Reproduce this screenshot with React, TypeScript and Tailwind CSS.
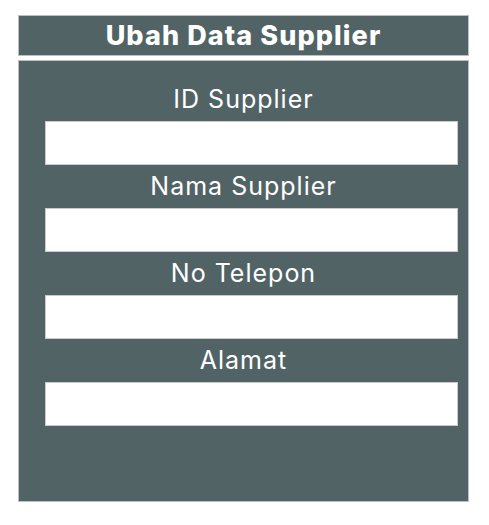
const fields = ["ID Supplier", "Nama Supplier", "No Telepon", "Alamat"];

export default function App() {
  return (
    <div className="min-h-[525px] w-[489px] bg-white pt-[15px] pl-[18px] font-['Inter',sans-serif]">
      <div className="flex w-[451px] flex-col gap-[4px]">
        <div className="flex h-[41px] items-center justify-center border border-[#b9c0c2] bg-[#526366]">
          <h1 className="text-[27px] font-extrabold leading-none tracking-[1.1px] text-white">
            Ubah Data Supplier
          </h1>
        </div>

        <div className="flex h-[442px] flex-col border border-[#b9c0c2] bg-[#526366] pt-[17px]">
          {fields.map((label) => (
            <div key={label} className="flex flex-col">
              <label className="flex h-[43px] items-center justify-center text-[25px] leading-none tracking-[1px] text-white">
                {label}
              </label>
              <input
                type="text"
                className="ml-[26px] mr-[10px] h-[44px] border border-[#c6cbcd] bg-white outline-none"
              />
            </div>
          ))}
        </div>
      </div>
    </div>
  );
}
